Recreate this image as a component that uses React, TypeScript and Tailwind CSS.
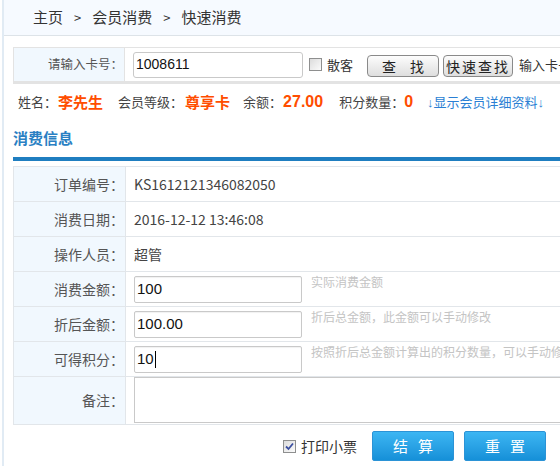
import React from "react";

const CJK = "font-['Microsoft_YaHei','Noto_Sans_CJK_SC',sans-serif]";

const Checkbox = ({ checked }: { checked?: boolean }) => (
    <span className="inline-flex h-[13px] w-[13px] shrink-0 items-center justify-center border border-[#8e8f8f] bg-gradient-to-br from-[#dcdcdc] to-[#fbfbfb]">
        {checked && (
            <svg width="9" height="9" viewBox="0 0 9 9">
                <path d="M1 4.5 L3.5 7 L8 1.5" fill="none" stroke="#3b4fa0" strokeWidth="1.8" />
            </svg>
        )}
    </span>
);

const GrayButton = ({ children, width }: { children: React.ReactNode; width: string }) => (
    <button
        className={`h-[22px] ${width} rounded-[4px] border border-[#8a8a8a] bg-gradient-to-b from-[#fdfdfd] to-[#dedede] text-[14px] leading-none text-[#222]`}
    >
        {children}
    </button>
);

const BlueButton = ({ children }: { children: React.ReactNode }) => (
    <button className="h-[30px] w-[82px] rounded-[2px] border border-[#2b93d6] bg-gradient-to-b from-[#3cb6f3] to-[#1590d8] text-[15px] tracking-[10px] text-white indent-[10px]">
        {children}
    </button>
);

const Row = ({ label, children, h = "h-[35px]" }: { label: string; children: React.ReactNode; h?: string }) => (
    <div className={`flex ${h} border-b border-[#e2e6ea]`}>
        <div className="flex w-[112px] shrink-0 items-center justify-end border-r border-[#e2e6ea] bg-[#f1f8fe] pr-[1px] text-[14px] text-[#555]">
            {label}
        </div>
        <div className="flex flex-1 items-center pl-[8px] text-[14px] text-[#444]">{children}</div>
    </div>
);

const InputRow = ({ label, value, hint, caret }: { label: string; value: string; hint: string; caret?: boolean }) => (
    <Row label={label}>
        <div className="flex h-[27px] w-[168px] items-center rounded-[2px] border border-[#c9c9c9] pl-[2px] font-['Liberation_Sans',Arial,sans-serif] text-[15px] text-[#111] shadow-[inset_0_1px_1px_rgba(0,0,0,0.06)]">
            {value}
            {caret && <span className="ml-[1px] inline-block h-[17px] w-[1px] bg-black" />}
        </div>
        <span className="ml-[9px] self-start whitespace-nowrap pt-[2px] text-[12px] leading-[16px] text-[#c4c4c4]">{hint}</span>
    </Row>
);

export default function App() {
    return (
        <div className={`min-h-[466px] w-full overflow-hidden bg-white ${CJK}`}>
            <div className="ml-[2px] min-h-[466px] w-[900px] border-l-2 border-[#e1ebf4]">
                <div className="flex h-[36px] items-center border-b border-[#dde3e8] bg-[#f6faff] pl-[29px] text-[15px] text-[#333]">
                    <span>主页</span>
                    <span className="mx-[11px] text-[13px]">&gt;</span>
                    <span>会员消费</span>
                    <span className="mx-[11px] text-[13px]">&gt;</span>
                    <span>快速消费</span>
                </div>

                <div className="pl-[9px]">
                    <div className="mt-[11px] flex h-[37px] border border-b-[3px] border-[#e3e3e3]">
                        <div className="flex w-[111px] shrink-0 items-center justify-end border-r border-[#e3e3e3] bg-[#f1f8fe] pr-[1px] text-[12.5px] text-[#555]">
                            请输入卡号：
                        </div>
                        <div className="flex items-center pl-[8px]">
                            <div className="flex h-[26px] w-[170px] items-center rounded-[3px] border border-[#c9c9c9] pl-[2px] font-['Liberation_Sans',Arial,sans-serif] text-[14px] text-[#111]">
                                1008611
                            </div>
                            <span className="ml-[6px] flex items-center gap-[5px] text-[13px] text-[#333]">
                                <Checkbox />
                                散客
                            </span>
                            <span className="ml-[14px]">
                                <GrayButton width="w-[72px]">查　找</GrayButton>
                            </span>
                            <span className="ml-[4px]">
                                <GrayButton width="w-[70px]">
                                    <span className="tracking-[2px]">快速查找</span>
                                </GrayButton>
                            </span>
                            <span className="ml-[6px] whitespace-nowrap text-[13px] text-[#333]">输入卡号，按回车键查询</span>
                        </div>
                    </div>

                    <div className="flex h-[36px] items-center whitespace-nowrap pl-[5px] text-[13px] text-[#444]">
                        <span>姓名：</span>
                        <span className="ml-[1px] text-[15px] font-bold text-[#ff4d00]">李先生</span>
                        <span className="ml-[15px]">会员等级：</span>
                        <span className="ml-[2px] text-[15px] font-bold text-[#ff4d00]">尊享卡</span>
                        <span className="ml-[13px]">余额：</span>
                        <span className="ml-[1px] font-['Liberation_Sans',Arial,sans-serif] text-[16px] font-bold text-[#ff4d00]">27.00</span>
                        <span className="ml-[16px]">积分数量：</span>
                        <span className="font-['Liberation_Sans',Arial,sans-serif] text-[16px] font-bold text-[#ff4d00]">0</span>
                        <span className="ml-[14px] text-[#2a7fd4]">
                            <span className="font-['Liberation_Sans',Arial,sans-serif]">↓</span>显示会员详细资料<span className="font-['Liberation_Sans',Arial,sans-serif]">↓</span>
                        </span>
                    </div>

                    <div className="flex h-[37px] items-center text-[15px] font-bold text-[#2a80c3]">消费信息</div>
                    <div className="h-[4px] bg-[#1f7ec0]" />

                    <div className="mt-[5px] border-l border-t border-[#e2e6ea]">
                        <Row label="订单编号：">KS1612121346082050</Row>
                        <Row label="消费日期：">2016-12-12 13:46:08</Row>
                        <Row label="操作人员：">超管</Row>
                        <InputRow label="消费金额：" value="100" hint="实际消费金额" />
                        <InputRow label="折后金额：" value="100.00" hint="折后总金额，此金额可以手动修改" />
                        <InputRow label="可得积分：" value="10" caret hint="按照折后总金额计算出的积分数量，可以手动修改" />
                        <div className="flex h-[48px] border-b border-[#e2e6ea]">
                            <div className="flex w-[112px] shrink-0 items-center justify-end border-r border-[#e2e6ea] bg-[#f1f8fe] pr-[1px] text-[14px] text-[#555]">
                                备注：
                            </div>
                            <div className="flex flex-1 pl-[8px]">
                                <div className="h-[46px] w-[600px] border border-[#c9c9c9]" />
                            </div>
                        </div>
                    </div>

                    <div className="flex h-[42px] items-center pl-[270px]">
                        <span className="flex items-center gap-[5px] text-[14px] text-[#333]">
                            <Checkbox checked />
                            打印小票
                        </span>
                        <span className="ml-[15px]">
                            <BlueButton>结算</BlueButton>
                        </span>
                        <span className="ml-[10px]">
                            <BlueButton>重置</BlueButton>
                        </span>
                    </div>
                </div>
            </div>
        </div>
    );
}
